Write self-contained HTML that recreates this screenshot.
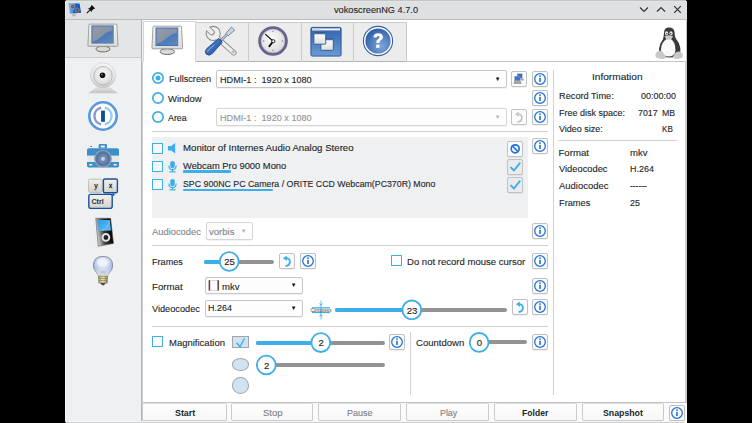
<!DOCTYPE html><html><head><meta charset="utf-8"><style>html,body{margin:0;padding:0;}body{width:752px;height:423px;background:#000;position:relative;overflow:hidden;font-family:"Liberation Sans",sans-serif;}.t{position:absolute;white-space:pre;line-height:1;-webkit-text-stroke:0.12px currentColor;}.b{-webkit-text-stroke:0;}</style></head><body>
<div style="position:absolute;left:65px;top:0px;width:622px;height:423px;background:#eff0f1;border-radius:3px;"></div>
<div style="position:absolute;left:65px;top:0px;width:622px;height:19px;background:#dfe0e2;border-radius:3px 3px 0 0;"></div>
<div style="position:absolute;left:65px;top:19px;width:622px;height:1px;background:#b9bbbd;"></div>
<div style="position:absolute;left:67px;top:0px;width:618px;height:1px;background:#c1c3c5;"></div>
<div style="position:absolute;left:66px;top:1px;width:620px;height:1px;background:#e4e6e6;"></div>
<div style="position:absolute;left:65px;top:2px;width:1px;height:17px;background:#e9eaeb;"></div>
<div class="t" style="left:333.60px;top:5.07px;font-size:9.6px;color:#232627;transform:scale(0.9611,1.0000);transform-origin:0 8.13px;">vokoscreenNG 4.7.0</div>
<div style="position:absolute;left:65px;top:20px;width:76px;height:403px;background:#eff0f1;border-radius:0 0 0 3px;"></div>
<div style="position:absolute;left:65px;top:20px;width:1px;height:400px;background:#f8f8f9;"></div>
<div style="position:absolute;left:141px;top:20px;width:1px;height:403px;background:#b3b5b7;"></div>
<div style="position:absolute;left:142px;top:20px;width:1px;height:42px;background:#eeeff0;"></div>
<div style="position:absolute;left:142px;top:62px;width:1px;height:361px;background:#cbcdce;"></div>
<div style="position:absolute;left:65px;top:20px;width:76px;height:37px;background:#e4e5e7;"></div>
<div style="position:absolute;left:65px;top:57px;width:76px;height:1px;background:#c9cbcd;"></div>
<div style="position:absolute;left:143px;top:20px;width:544px;height:403px;background:#ffffff;"></div>
<div style="position:absolute;left:143px;top:21px;width:53px;height:41px;box-sizing:border-box;border:1px solid #d3d5d6;border-bottom:none;background:#fff;"></div>
<div style="position:absolute;left:196px;top:22px;width:53px;height:40px;box-sizing:border-box;border:1px solid #c9cbcc;border-bottom:1px solid #b2b4b5;border-left:none;background:#ececed;border-radius:0 0 0 1px;"></div>
<div style="position:absolute;left:249px;top:22px;width:53px;height:40px;box-sizing:border-box;border:1px solid #c9cbcc;border-bottom:1px solid #b2b4b5;border-left:none;background:#ececed;border-radius:0 0 0 1px;"></div>
<div style="position:absolute;left:302px;top:22px;width:52px;height:40px;box-sizing:border-box;border:1px solid #c9cbcc;border-bottom:1px solid #b2b4b5;border-left:none;background:#ececed;border-radius:0 0 0 1px;"></div>
<div style="position:absolute;left:354px;top:22px;width:53px;height:40px;box-sizing:border-box;border:1px solid #c9cbcc;border-bottom:1px solid #b2b4b5;border-left:none;background:#ececed;border-radius:0 0 0 1px;"></div>
<div style="position:absolute;left:406px;top:61px;width:281px;height:1px;background:#c2c4c5;"></div>
<div style="position:absolute;left:685px;top:61px;width:1px;height:342px;background:#cfd1d2;"></div>
<div style="position:absolute;left:686px;top:20px;width:1px;height:403px;background:#c3c5c6;"></div>
<div style="position:absolute;left:143px;top:402px;width:543px;height:1px;background:#c2c4c5;"></div>
<svg style="position:absolute;left:150px;top:70.2px;" width="16" height="16" viewBox="0 0 16 16"><circle cx="8" cy="8" r="5.2" fill="#fdfdfd" stroke="#3daee9" stroke-width="1.7"/><circle cx="8" cy="8" r="2.5" fill="#3daee9"/></svg>
<svg style="position:absolute;left:150px;top:90px;" width="16" height="16" viewBox="0 0 16 16"><circle cx="8" cy="8" r="5.2" fill="#fdfdfd" stroke="#3daee9" stroke-width="1.7"/></svg>
<svg style="position:absolute;left:150px;top:108.8px;" width="16" height="16" viewBox="0 0 16 16"><circle cx="8" cy="8" r="5.2" fill="#fdfdfd" stroke="#3daee9" stroke-width="1.7"/></svg>
<div class="t" style="left:168.70px;top:74.47px;font-size:9.6px;color:#232627;transform:scale(0.9530,1.0000);transform-origin:0 8.13px;">Fullscreen</div>
<div class="t" style="left:168.40px;top:94.27px;font-size:9.6px;color:#232627;transform:scale(0.9870,1.0000);transform-origin:0 8.13px;">Window</div>
<div class="t" style="left:168.40px;top:112.67px;font-size:9.6px;color:#232627;transform:scale(0.9222,1.0000);transform-origin:0 8.13px;">Area</div>
<div style="position:absolute;left:216px;top:70px;width:291px;height:18px;box-sizing:border-box;border:1px solid #c4c6c8;border-radius:2px;background:#fdfdfd;box-shadow:0 1px 1px rgba(0,0,0,0.06);"></div>
<svg style="position:absolute;left:495px;top:76px;" width="6" height="6" viewBox="0 0 6 6"><path d="M1.3 1.8 L4.1 1.8 L2.7 4.6 Z" fill="#111" stroke="#111" stroke-width="0.5" stroke-linejoin="round"/></svg>
<div class="t" style="left:219.90px;top:74.97px;font-size:9.6px;color:#232627;transform:scale(0.9495,1.0000);transform-origin:0 8.13px;">HDMI-1 :  1920 x 1080</div>
<div style="position:absolute;left:216px;top:108px;width:291px;height:18px;box-sizing:border-box;border:1px solid #d3d5d6;border-radius:2px;background:#fdfdfd;box-shadow:0 1px 1px rgba(0,0,0,0.06);"></div>
<svg style="position:absolute;left:495px;top:114px;" width="6" height="6" viewBox="0 0 6 6"><path d="M1.3 1.8 L4.1 1.8 L2.7 4.6 Z" fill="#b0b2b4" stroke="#b0b2b4" stroke-width="0.5" stroke-linejoin="round"/></svg>
<div class="t" style="left:219.90px;top:112.87px;font-size:9.6px;color:#939597;transform:scale(0.9495,1.0000);transform-origin:0 8.13px;">HDMI-1 :  1920 x 1080</div>
<div style="position:absolute;left:511px;top:70.5px;width:16px;height:16px;box-sizing:border-box;border:1px solid #bfc1c3;border-radius:2px;background:#fcfcfc;box-shadow:0 0.5px 0.5px rgba(0,0,0,0.12);"></div>
<div style="position:absolute;left:511px;top:108.5px;width:16px;height:16px;box-sizing:border-box;border:1px solid #bfc1c3;border-radius:2px;background:#fcfcfc;box-shadow:0 0.5px 0.5px rgba(0,0,0,0.12);"></div>
<svg style="position:absolute;left:511px;top:108.5px;" width="16" height="16" viewBox="0 0 16 16"><path d="M5.5 5.2 C9.5 4.6 11.5 7 10.8 9.8 C10.3 11.8 8.6 12.8 7.2 12.9" fill="none" stroke="#c4c6c8" stroke-width="1.8" stroke-linecap="round"/><path d="M4.2 5.3 L7.8 2.6 L7.8 8 Z" fill="#c4c6c8"/></svg>
<div style="position:absolute;left:532px;top:70.5px;width:16px;height:16px;box-sizing:border-box;border:1px solid #bfc1c3;border-radius:2px;background:#fcfcfc;box-shadow:0 0.5px 0.5px rgba(0,0,0,0.12);"></div>
<svg style="position:absolute;left:532px;top:70.5px;" width="16" height="16" viewBox="0 0 16 16"><circle cx="8" cy="8" r="5.3" fill="#fffdf5" stroke="#1f73d9" stroke-width="1.3"/><rect x="7.2" y="6.8" width="1.6" height="4.2" fill="#1f73d9"/><circle cx="8" cy="5.1" r="0.95" fill="#1f73d9"/></svg>
<div style="position:absolute;left:532px;top:90px;width:16px;height:16px;box-sizing:border-box;border:1px solid #bfc1c3;border-radius:2px;background:#fcfcfc;box-shadow:0 0.5px 0.5px rgba(0,0,0,0.12);"></div>
<svg style="position:absolute;left:532px;top:90px;" width="16" height="16" viewBox="0 0 16 16"><circle cx="8" cy="8" r="5.3" fill="#fffdf5" stroke="#1f73d9" stroke-width="1.3"/><rect x="7.2" y="6.8" width="1.6" height="4.2" fill="#1f73d9"/><circle cx="8" cy="5.1" r="0.95" fill="#1f73d9"/></svg>
<div style="position:absolute;left:532px;top:109px;width:16px;height:16px;box-sizing:border-box;border:1px solid #bfc1c3;border-radius:2px;background:#fcfcfc;box-shadow:0 0.5px 0.5px rgba(0,0,0,0.12);"></div>
<svg style="position:absolute;left:532px;top:109px;" width="16" height="16" viewBox="0 0 16 16"><circle cx="8" cy="8" r="5.3" fill="#fffdf5" stroke="#1f73d9" stroke-width="1.3"/><rect x="7.2" y="6.8" width="1.6" height="4.2" fill="#1f73d9"/><circle cx="8" cy="5.1" r="0.95" fill="#1f73d9"/></svg>
<div style="position:absolute;left:152px;top:131px;width:396px;height:1px;background:#cfd1d2;"></div>
<div style="position:absolute;left:152px;top:137px;width:376px;height:81px;background:#eff0f1;"></div>
<div style="position:absolute;left:152.3px;top:143.1px;width:11px;height:11px;box-sizing:border-box;border:1.6px solid #3daee9;border-radius:0.5px;background:#f6f7f8;"></div>
<div style="position:absolute;left:152.3px;top:161.0px;width:11px;height:11px;box-sizing:border-box;border:1.6px solid #3daee9;border-radius:0.5px;background:#f6f7f8;"></div>
<div style="position:absolute;left:152.3px;top:179.1px;width:11px;height:11px;box-sizing:border-box;border:1.6px solid #3daee9;border-radius:0.5px;background:#f6f7f8;"></div>
<div class="t" style="left:183.20px;top:143.27px;font-size:9.6px;color:#232627;transform:scale(1.0059,1.0000);transform-origin:0 8.13px;">Monitor of Internes Audio Analog Stereo</div>
<div class="t" style="left:183.20px;top:161.17px;font-size:9.6px;color:#232627;transform:scale(0.9745,1.0000);transform-origin:0 8.13px;">Webcam Pro 9000 Mono</div>
<div class="t" style="left:183.20px;top:179.27px;font-size:9.6px;color:#232627;transform:scale(0.9161,1.0000);transform-origin:0 8.13px;">SPC 900NC PC Camera / ORITE CCD Webcam(PC370R) Mono</div>
<div style="position:absolute;left:183px;top:170.4px;width:48px;height:2.2px;background:#3daee9;border-radius:1px;"></div>
<div style="position:absolute;left:183px;top:188.5px;width:90px;height:2.2px;background:#3daee9;border-radius:1px;"></div>
<div style="position:absolute;left:507px;top:141px;width:16px;height:16px;box-sizing:border-box;border:1px solid #bfc1c3;border-radius:2px;background:#fcfcfc;box-shadow:0 0.5px 0.5px rgba(0,0,0,0.12);"></div>
<svg style="position:absolute;left:507px;top:141px;" width="16" height="16" viewBox="0 0 16 16"><circle cx="8.2" cy="7.8" r="4" fill="none" stroke="#1f73d9" stroke-width="1.7"/><path d="M5.4 5 L11 10.6" stroke="#1f73d9" stroke-width="1.7"/></svg>
<div style="position:absolute;left:507px;top:159px;width:16px;height:16px;box-sizing:border-box;border:1px solid #bfc1c3;border-radius:2px;background:#ebebec;box-shadow:0 0.5px 0.5px rgba(0,0,0,0.12);"></div>
<div style="position:absolute;left:507px;top:177px;width:16px;height:16px;box-sizing:border-box;border:1px solid #bfc1c3;border-radius:2px;background:#ebebec;box-shadow:0 0.5px 0.5px rgba(0,0,0,0.12);"></div>
<svg style="position:absolute;left:507px;top:159px;" width="16" height="16" viewBox="0 0 16 16"><path d="M4 8.6 L7 11.5 L12.8 4.2" fill="none" stroke="#3daee9" stroke-width="1.9" stroke-linecap="round" stroke-linejoin="round"/></svg>
<svg style="position:absolute;left:507px;top:177px;" width="16" height="16" viewBox="0 0 16 16"><path d="M4 8.6 L7 11.5 L12.8 4.2" fill="none" stroke="#3daee9" stroke-width="1.9" stroke-linecap="round" stroke-linejoin="round"/></svg>
<div style="position:absolute;left:532px;top:138px;width:16px;height:16px;box-sizing:border-box;border:1px solid #bfc1c3;border-radius:2px;background:#fcfcfc;box-shadow:0 0.5px 0.5px rgba(0,0,0,0.12);"></div>
<svg style="position:absolute;left:532px;top:138px;" width="16" height="16" viewBox="0 0 16 16"><circle cx="8" cy="8" r="5.3" fill="#fffdf5" stroke="#1f73d9" stroke-width="1.3"/><rect x="7.2" y="6.8" width="1.6" height="4.2" fill="#1f73d9"/><circle cx="8" cy="5.1" r="0.95" fill="#1f73d9"/></svg>
<div class="t" style="left:151.70px;top:226.77px;font-size:9.6px;color:#838587;transform:scale(0.9747,1.0000);transform-origin:0 8.13px;">Audiocodec</div>
<div style="position:absolute;left:206px;top:222px;width:47px;height:18px;box-sizing:border-box;border:1px solid #d3d5d6;border-radius:2px;background:#fdfdfd;box-shadow:0 1px 1px rgba(0,0,0,0.06);"></div>
<svg style="position:absolute;left:241px;top:228px;" width="6" height="6" viewBox="0 0 6 6"><path d="M1.3 1.8 L4.1 1.8 L2.7 4.6 Z" fill="#b0b2b4" stroke="#b0b2b4" stroke-width="0.5" stroke-linejoin="round"/></svg>
<div class="t" style="left:209.20px;top:226.67px;font-size:9.6px;color:#838587;transform:scale(0.9958,1.0000);transform-origin:0 8.13px;">vorbis</div>
<div style="position:absolute;left:532px;top:223px;width:16px;height:16px;box-sizing:border-box;border:1px solid #bfc1c3;border-radius:2px;background:#fcfcfc;box-shadow:0 0.5px 0.5px rgba(0,0,0,0.12);"></div>
<svg style="position:absolute;left:532px;top:223px;" width="16" height="16" viewBox="0 0 16 16"><circle cx="8" cy="8" r="5.3" fill="#fffdf5" stroke="#1f73d9" stroke-width="1.3"/><rect x="7.2" y="6.8" width="1.6" height="4.2" fill="#1f73d9"/><circle cx="8" cy="5.1" r="0.95" fill="#1f73d9"/></svg>
<div style="position:absolute;left:152px;top:245px;width:396px;height:1px;background:#cfd1d2;"></div>
<div class="t" style="left:151.70px;top:257.27px;font-size:9.6px;color:#232627;transform:scale(0.9498,1.0000);transform-origin:0 8.13px;">Frames</div>
<div style="position:absolute;left:204px;top:259.5px;width:70px;height:4px;background:#919394;border-radius:2px;"></div>
<div style="position:absolute;left:204px;top:259.5px;width:25.19999999999999px;height:4px;background:#3daee9;border-radius:2px;"></div>
<svg style="position:absolute;left:218px;top:250px;" width="22" height="22" viewBox="0 0 22 22"><circle cx="11.199999999999989" cy="11.5" r="9.4" fill="#fff" stroke="#3daee9" stroke-width="1.8"/></svg>
<div class="t" style="left:224.16px;top:257.37px;font-size:9.6px;color:#1e2021;-webkit-text-stroke:0.12px #1e2021;">25</div>
<div style="position:absolute;left:279px;top:253px;width:16px;height:16px;box-sizing:border-box;border:1px solid #bfc1c3;border-radius:2px;background:#fcfcfc;box-shadow:0 0.5px 0.5px rgba(0,0,0,0.12);"></div>
<svg style="position:absolute;left:279px;top:253px;" width="16" height="16" viewBox="0 0 16 16"><path d="M5.5 5.2 C9.5 4.6 11.5 7 10.8 9.8 C10.3 11.8 8.6 12.8 7.2 12.9" fill="none" stroke="#3daee9" stroke-width="1.8" stroke-linecap="round"/><path d="M4.2 5.3 L7.8 2.6 L7.8 8 Z" fill="#3daee9"/></svg>
<div style="position:absolute;left:299.5px;top:253px;width:16px;height:16px;box-sizing:border-box;border:1px solid #bfc1c3;border-radius:2px;background:#fcfcfc;box-shadow:0 0.5px 0.5px rgba(0,0,0,0.12);"></div>
<svg style="position:absolute;left:299.5px;top:253px;" width="16" height="16" viewBox="0 0 16 16"><circle cx="8" cy="8" r="5.3" fill="#fffdf5" stroke="#1f73d9" stroke-width="1.3"/><rect x="7.2" y="6.8" width="1.6" height="4.2" fill="#1f73d9"/><circle cx="8" cy="5.1" r="0.95" fill="#1f73d9"/></svg>
<div style="position:absolute;left:391px;top:255px;width:11px;height:11px;box-sizing:border-box;border:1.6px solid #3daee9;border-radius:0.5px;background:#fdfdfd;"></div>
<div class="t" style="left:407.30px;top:257.47px;font-size:9.6px;color:#232627;transform:scale(0.9943,1.0000);transform-origin:0 8.13px;">Do not record mouse cursor</div>
<div style="position:absolute;left:532px;top:253px;width:16px;height:16px;box-sizing:border-box;border:1px solid #bfc1c3;border-radius:2px;background:#fcfcfc;box-shadow:0 0.5px 0.5px rgba(0,0,0,0.12);"></div>
<svg style="position:absolute;left:532px;top:253px;" width="16" height="16" viewBox="0 0 16 16"><circle cx="8" cy="8" r="5.3" fill="#fffdf5" stroke="#1f73d9" stroke-width="1.3"/><rect x="7.2" y="6.8" width="1.6" height="4.2" fill="#1f73d9"/><circle cx="8" cy="5.1" r="0.95" fill="#1f73d9"/></svg>
<div class="t" style="left:152.30px;top:281.57px;font-size:9.6px;color:#232627;transform:scale(1.0066,1.0000);transform-origin:0 8.13px;">Format</div>
<div style="position:absolute;left:204.5px;top:277px;width:98px;height:17px;box-sizing:border-box;border:1px solid #c4c6c8;border-radius:2px;background:#fdfdfd;box-shadow:0 1px 1px rgba(0,0,0,0.06);"></div>
<svg style="position:absolute;left:291px;top:282px;" width="6" height="6" viewBox="0 0 6 6"><path d="M1.3 1.8 L4.1 1.8 L2.7 4.6 Z" fill="#111" stroke="#111" stroke-width="0.5" stroke-linejoin="round"/></svg>
<svg style="position:absolute;left:208px;top:279px;" width="12" height="13" viewBox="0 0 12 13"><rect x="1.3" y="1.4" width="9" height="10" fill="#fbfbfb" stroke="#d9cccc" stroke-width="0.8"/><path d="M1.4 1.2 V11.6 M10.2 1.2 V11.6" stroke="#6e3b3b" stroke-width="1.5"/></svg>
<div class="t" style="left:221.90px;top:281.57px;font-size:9.6px;color:#232627;transform:scale(0.9945,1.0000);transform-origin:0 8.13px;">mkv</div>
<div style="position:absolute;left:532px;top:278px;width:16px;height:16px;box-sizing:border-box;border:1px solid #bfc1c3;border-radius:2px;background:#fcfcfc;box-shadow:0 0.5px 0.5px rgba(0,0,0,0.12);"></div>
<svg style="position:absolute;left:532px;top:278px;" width="16" height="16" viewBox="0 0 16 16"><circle cx="8" cy="8" r="5.3" fill="#fffdf5" stroke="#1f73d9" stroke-width="1.3"/><rect x="7.2" y="6.8" width="1.6" height="4.2" fill="#1f73d9"/><circle cx="8" cy="5.1" r="0.95" fill="#1f73d9"/></svg>
<div class="t" style="left:151.90px;top:304.17px;font-size:9.6px;color:#232627;transform:scale(0.9581,1.0000);transform-origin:0 8.13px;">Videocodec</div>
<div style="position:absolute;left:204.5px;top:299.5px;width:98px;height:17px;box-sizing:border-box;border:1px solid #c4c6c8;border-radius:2px;background:#fdfdfd;box-shadow:0 1px 1px rgba(0,0,0,0.06);"></div>
<svg style="position:absolute;left:291px;top:305px;" width="6" height="6" viewBox="0 0 6 6"><path d="M1.3 1.8 L4.1 1.8 L2.7 4.6 Z" fill="#111" stroke="#111" stroke-width="0.5" stroke-linejoin="round"/></svg>
<div class="t" style="left:208.20px;top:303.47px;font-size:9.6px;color:#232627;transform:scale(0.9330,1.0000);transform-origin:0 8.13px;">H.264</div>
<svg style="position:absolute;left:310px;top:300px;" width="22" height="20" viewBox="0 0 22 20"><path d="M11 0.5 V19.5" stroke="#3daee9" stroke-width="1" opacity="0.75"/><path d="M9.6 3.4 L11 5.4 L12.4 3.4 M9.6 16.6 L11 14.6 L12.4 16.6" stroke="#3daee9" stroke-width="0.8" fill="none"/><rect x="2" y="7.2" width="18" height="1.3" fill="#3daee9"/><rect x="2" y="11.8" width="18" height="1.3" fill="#3daee9"/><text x="11" y="11.7" font-size="4.6" text-anchor="middle" fill="#5a4a44" font-family="Liberation Sans">Compress</text></svg>
<div style="position:absolute;left:335px;top:307.9px;width:172px;height:4px;background:#919394;border-radius:2px;"></div>
<div style="position:absolute;left:335px;top:307.9px;width:76.80000000000001px;height:4px;background:#3daee9;border-radius:2px;"></div>
<svg style="position:absolute;left:400px;top:298px;" width="22" height="22" viewBox="0 0 22 22"><circle cx="11.800000000000011" cy="11.899999999999977" r="9.4" fill="#fff" stroke="#3daee9" stroke-width="1.8"/></svg>
<div class="t" style="left:406.76px;top:305.77px;font-size:9.6px;color:#1e2021;-webkit-text-stroke:0.12px #1e2021;">23</div>
<div style="position:absolute;left:512px;top:299px;width:16px;height:16px;box-sizing:border-box;border:1px solid #bfc1c3;border-radius:2px;background:#fcfcfc;box-shadow:0 0.5px 0.5px rgba(0,0,0,0.12);"></div>
<svg style="position:absolute;left:512px;top:299px;" width="16" height="16" viewBox="0 0 16 16"><path d="M5.5 5.2 C9.5 4.6 11.5 7 10.8 9.8 C10.3 11.8 8.6 12.8 7.2 12.9" fill="none" stroke="#3daee9" stroke-width="1.8" stroke-linecap="round"/><path d="M4.2 5.3 L7.8 2.6 L7.8 8 Z" fill="#3daee9"/></svg>
<div style="position:absolute;left:532px;top:299px;width:16px;height:16px;box-sizing:border-box;border:1px solid #bfc1c3;border-radius:2px;background:#fcfcfc;box-shadow:0 0.5px 0.5px rgba(0,0,0,0.12);"></div>
<svg style="position:absolute;left:532px;top:299px;" width="16" height="16" viewBox="0 0 16 16"><circle cx="8" cy="8" r="5.3" fill="#fffdf5" stroke="#1f73d9" stroke-width="1.3"/><rect x="7.2" y="6.8" width="1.6" height="4.2" fill="#1f73d9"/><circle cx="8" cy="5.1" r="0.95" fill="#1f73d9"/></svg>
<div style="position:absolute;left:152px;top:326px;width:396px;height:1px;background:#cfd1d2;"></div>
<div style="position:absolute;left:152px;top:336px;width:11px;height:11px;box-sizing:border-box;border:1.6px solid #3daee9;border-radius:0.5px;background:#fdfdfd;"></div>
<div class="t" style="left:168.50px;top:337.87px;font-size:9.6px;color:#232627;transform:scale(0.9901,1.0000);transform-origin:0 8.13px;">Magnification</div>
<div style="position:absolute;left:232px;top:336px;width:17px;height:12px;box-sizing:border-box;border:1.2px solid #a3a5a7;background:#cfe3f3;"></div>
<svg style="position:absolute;left:232px;top:335.5px;" width="17" height="13" viewBox="0 0 17 13"><path d="M4.5 6.8 L8 10.8 L12.5 2.5" fill="none" stroke="#3daee9" stroke-width="1.4"/></svg>
<div style="position:absolute;left:232px;top:358px;width:17px;height:12.5px;box-sizing:border-box;border:1.5px solid #a3a5a7;border-radius:50%;background:#cfe3f3;"></div>
<div style="position:absolute;left:232px;top:377px;width:17px;height:16.5px;box-sizing:border-box;border:1.6px solid #a3a5a7;border-radius:50%;background:#cfe3f3;"></div>
<div style="position:absolute;left:256px;top:340.6px;width:129px;height:4px;background:#919394;border-radius:2px;"></div>
<div style="position:absolute;left:256px;top:340.6px;width:64.80000000000001px;height:4px;background:#3daee9;border-radius:2px;"></div>
<svg style="position:absolute;left:309px;top:331px;" width="22" height="22" viewBox="0 0 22 22"><circle cx="11.800000000000011" cy="11.600000000000023" r="9.4" fill="#fff" stroke="#3daee9" stroke-width="1.8"/></svg>
<div class="t" style="left:318.43px;top:338.47px;font-size:9.6px;color:#1e2021;-webkit-text-stroke:0.12px #1e2021;">2</div>
<div style="position:absolute;left:256px;top:363px;width:129px;height:4px;background:#919394;border-radius:2px;"></div>
<svg style="position:absolute;left:255px;top:354px;" width="22" height="22" viewBox="0 0 22 22"><circle cx="11.300000000000011" cy="11" r="9.4" fill="#fff" stroke="#3daee9" stroke-width="1.8"/></svg>
<div class="t" style="left:263.93px;top:360.87px;font-size:9.6px;color:#1e2021;-webkit-text-stroke:0.12px #1e2021;">2</div>
<div style="position:absolute;left:389px;top:334px;width:16px;height:16px;box-sizing:border-box;border:1px solid #bfc1c3;border-radius:2px;background:#fcfcfc;box-shadow:0 0.5px 0.5px rgba(0,0,0,0.12);"></div>
<svg style="position:absolute;left:389px;top:334px;" width="16" height="16" viewBox="0 0 16 16"><circle cx="8" cy="8" r="5.3" fill="#fffdf5" stroke="#1f73d9" stroke-width="1.3"/><rect x="7.2" y="6.8" width="1.6" height="4.2" fill="#1f73d9"/><circle cx="8" cy="5.1" r="0.95" fill="#1f73d9"/></svg>
<div style="position:absolute;left:410px;top:332px;width:1px;height:63px;background:#cfd1d2;"></div>
<div class="t" style="left:416.00px;top:338.07px;font-size:9.6px;color:#232627;transform:scale(0.9946,1.0000);transform-origin:0 8.13px;">Countdown</div>
<div style="position:absolute;left:479px;top:340.4px;width:48px;height:4px;background:#919394;border-radius:2px;"></div>
<svg style="position:absolute;left:468px;top:331px;" width="22" height="22" viewBox="0 0 22 22"><circle cx="11.100000000000023" cy="11.399999999999977" r="9.4" fill="#fff" stroke="#3daee9" stroke-width="1.8"/></svg>
<div class="t" style="left:476.73px;top:338.27px;font-size:9.6px;color:#1e2021;-webkit-text-stroke:0.12px #1e2021;">0</div>
<div style="position:absolute;left:532px;top:334px;width:16px;height:16px;box-sizing:border-box;border:1px solid #bfc1c3;border-radius:2px;background:#fcfcfc;box-shadow:0 0.5px 0.5px rgba(0,0,0,0.12);"></div>
<svg style="position:absolute;left:532px;top:334px;" width="16" height="16" viewBox="0 0 16 16"><circle cx="8" cy="8" r="5.3" fill="#fffdf5" stroke="#1f73d9" stroke-width="1.3"/><rect x="7.2" y="6.8" width="1.6" height="4.2" fill="#1f73d9"/><circle cx="8" cy="5.1" r="0.95" fill="#1f73d9"/></svg>
<div style="position:absolute;left:553px;top:70px;width:1px;height:325px;background:#cfd1d2;"></div>
<div class="t" style="left:592.00px;top:72.27px;font-size:9.6px;color:#232627;transform:scale(1.0537,1.0000);transform-origin:0 8.13px;">Information</div>
<div class="t" style="left:559.10px;top:91.37px;font-size:9.6px;color:#232627;transform:scale(0.9600,1.0000);transform-origin:0 8.13px;">Record Time:</div>
<div class="t" style="left:640.90px;top:91.37px;font-size:9.6px;color:#232627;transform:scale(0.9394,1.0000);transform-origin:0 8.13px;">00:00:00</div>
<div class="t" style="left:559.10px;top:107.97px;font-size:9.6px;color:#232627;transform:scale(0.9386,1.0000);transform-origin:0 8.13px;">Free disk space:</div>
<div class="t" style="left:637.50px;top:107.87px;font-size:9.6px;color:#232627;transform:scale(0.9179,1.0000);transform-origin:0 8.13px;">7017</div>
<div class="t" style="left:662.40px;top:107.87px;font-size:9.6px;color:#232627;transform:scale(0.9097,1.0000);transform-origin:0 8.13px;">MB</div>
<div class="t" style="left:559.10px;top:124.47px;font-size:9.6px;color:#232627;transform:scale(0.9362,1.0000);transform-origin:0 8.13px;">Video size:</div>
<div class="t" style="left:662.40px;top:124.17px;font-size:9.6px;color:#232627;transform:scale(0.8433,1.0000);transform-origin:0 8.13px;">KB</div>
<div style="position:absolute;left:558px;top:140px;width:119px;height:1px;background:#cfd1d2;"></div>
<div class="t" style="left:558.50px;top:147.77px;font-size:9.6px;color:#232627;">Format</div>
<div class="t" style="left:630.40px;top:147.77px;font-size:9.6px;color:#232627;transform:scale(0.9945,1.0000);transform-origin:0 8.13px;">mkv</div>
<div class="t" style="left:558.50px;top:164.44px;font-size:9.6px;color:#232627;transform:scale(0.9701,1.0000);transform-origin:0 8.13px;">Videocodec</div>
<div class="t" style="left:630.40px;top:164.44px;font-size:9.6px;color:#232627;transform:scale(0.9330,1.0000);transform-origin:0 8.13px;">H.264</div>
<div class="t" style="left:558.50px;top:181.11px;font-size:9.6px;color:#232627;transform:scale(0.9847,1.0000);transform-origin:0 8.13px;">Audiocodec</div>
<div class="t" style="left:630.40px;top:181.11px;font-size:9.6px;color:#232627;transform:scale(0.8760,1.0000);transform-origin:0 8.13px;">------</div>
<div class="t" style="left:558.50px;top:197.78px;font-size:9.6px;color:#232627;transform:scale(0.9621,1.0000);transform-origin:0 8.13px;">Frames</div>
<div class="t" style="left:630.40px;top:197.78px;font-size:9.6px;color:#232627;transform:scale(0.9366,1.0000);transform-origin:0 8.13px;">25</div>
<div style="position:absolute;left:143px;top:403px;width:544px;height:20px;background:#fbfbfb;"></div>
<div style="position:absolute;left:142px;top:403px;width:85px;height:18px;box-sizing:border-box;border:1px solid #c8cacc;border-top-color:#dadcdd;border-radius:2px;background:linear-gradient(#fefefe,#f7f7f7);"></div>
<div class="t" style="left:174.70px;top:408.07px;font-size:9.6px;color:#232627;font-weight:bold;-webkit-text-stroke:0;transform:scale(0.9236,1.0000);transform-origin:0 8.13px;">Start</div>
<div style="position:absolute;left:231px;top:403px;width:82px;height:18px;box-sizing:border-box;border:1px solid #c8cacc;border-top-color:#dadcdd;border-radius:2px;background:linear-gradient(#fefefe,#f7f7f7);"></div>
<div class="t" style="left:262.60px;top:408.07px;font-size:9.6px;color:#7e8082;transform:scale(0.9925,1.0000);transform-origin:0 8.13px;">Stop</div>
<div style="position:absolute;left:318px;top:403px;width:83px;height:18px;box-sizing:border-box;border:1px solid #c8cacc;border-top-color:#dadcdd;border-radius:2px;background:linear-gradient(#fefefe,#f7f7f7);"></div>
<div class="t" style="left:347.40px;top:408.07px;font-size:9.6px;color:#7e8082;transform:scale(0.9368,1.0000);transform-origin:0 8.13px;">Pause</div>
<div style="position:absolute;left:406px;top:403px;width:83px;height:18px;box-sizing:border-box;border:1px solid #c8cacc;border-top-color:#dadcdd;border-radius:2px;background:linear-gradient(#fefefe,#f7f7f7);"></div>
<div class="t" style="left:439.60px;top:408.07px;font-size:9.6px;color:#7e8082;transform:scale(0.9210,1.0000);transform-origin:0 8.13px;">Play</div>
<div style="position:absolute;left:494px;top:403px;width:83px;height:18px;box-sizing:border-box;border:1px solid #c8cacc;border-top-color:#dadcdd;border-radius:2px;background:linear-gradient(#fefefe,#f7f7f7);"></div>
<div class="t" style="left:522.30px;top:408.07px;font-size:9.6px;color:#232627;font-weight:bold;-webkit-text-stroke:0;transform:scale(0.8966,1.0000);transform-origin:0 8.13px;">Folder</div>
<div style="position:absolute;left:582px;top:403px;width:82px;height:18px;box-sizing:border-box;border:1px solid #c8cacc;border-top-color:#dadcdd;border-radius:2px;background:linear-gradient(#fefefe,#f7f7f7);"></div>
<div class="t" style="left:603.20px;top:408.07px;font-size:9.6px;color:#232627;font-weight:bold;-webkit-text-stroke:0;transform:scale(0.9124,1.0000);transform-origin:0 8.13px;">Snapshot</div>
<div style="position:absolute;left:669px;top:404.5px;width:16px;height:16px;box-sizing:border-box;border:1px solid #bfc1c3;border-radius:2px;background:#fcfcfc;box-shadow:0 0.5px 0.5px rgba(0,0,0,0.12);"></div>
<svg style="position:absolute;left:669px;top:404.5px;" width="16" height="16" viewBox="0 0 16 16"><circle cx="8" cy="8" r="5.3" fill="#fffdf5" stroke="#1f73d9" stroke-width="1.3"/><rect x="7.2" y="6.8" width="1.6" height="4.2" fill="#1f73d9"/><circle cx="8" cy="5.1" r="0.95" fill="#1f73d9"/></svg>
<div style="position:absolute;left:68px;top:421px;width:616px;height:1px;background:#f6f6f7;"></div>
<div style="position:absolute;left:66px;top:422px;width:619px;height:1px;background:#cdcfd0;border-radius:0 0 2px 2px;"></div>
<svg style="position:absolute;left:151px;top:24px" width="32.0" height="32.0" viewBox="0 0 32 32">
<defs><linearGradient id="mtg" x1="0" y1="0" x2="1" y2="1"><stop offset="0" stop-color="#959ca6"/><stop offset="1" stop-color="#7d8b9e"/></linearGradient>
<linearGradient id="mtb" x1="0" y1="0" x2="1" y2="1"><stop offset="0" stop-color="#3b69a8"/><stop offset="1" stop-color="#6089c0"/></linearGradient>
<linearGradient id="mtf" x1="0" y1="0" x2="0" y2="1"><stop offset="0" stop-color="#f6f5f1"/><stop offset="1" stop-color="#dddbd5"/></linearGradient></defs>
<path d="M12.6 24 L20 24 L20.6 26.5 L12 26.5 Z" fill="#d2d2ce" stroke="#9a9b97" stroke-width="0.5"/>
<ellipse cx="16.3" cy="27.6" rx="7.2" ry="2.9" fill="#d9d9d5" stroke="#6a6c68" stroke-width="1"/>
<path d="M2.8 2.2 L29.8 2.2 Q30.5 2.2 30.5 3 L31.6 23.8 Q31.6 24.8 30.6 24.8 L1.8 24.8 Q0.8 24.8 0.9 23.8 L2 3 Q2 2.2 2.8 2.2 Z" fill="url(#mtf)" stroke="#8d8e89" stroke-width="0.8"/>
<rect x="5" y="4" width="21.7" height="17.5" fill="url(#mtg)" stroke="#3a72c8" stroke-width="1"/>
<path d="M5.4 19.6 Q11 18.6 16 13.6 Q21 9 26.3 8.4 L26.3 21.1 L5.4 21.1 Z" fill="url(#mtb)"/>
<path d="M5.4 19.6 Q11 18.6 16 13.6 Q21 9 26.3 8.4" fill="none" stroke="#7ea2d6" stroke-width="0.5" opacity="0.7"/>
</svg>
<svg style="position:absolute;left:203px;top:24px" width="34" height="34" viewBox="0 0 34 34">
<defs><linearGradient id="tlh" x1="0" y1="0" x2="1" y2="1"><stop offset="0" stop-color="#5b8fd4"/><stop offset="0.6" stop-color="#3467b2"/><stop offset="1" stop-color="#234f94"/></linearGradient>
<clipPath id="wclip"><circle cx="10.2" cy="9.4" r="7.6"/></clipPath></defs>
<path d="M11 11 L30.8 28.8" stroke="#8a8c88" stroke-width="5.4" stroke-linecap="round"/>
<circle cx="10.2" cy="9.4" r="7.6" fill="#8a8c88"/>
<path d="M11 11 L30.8 28.8" stroke="#efeeeb" stroke-width="3.6" stroke-linecap="round"/>
<circle cx="10.2" cy="9.4" r="6.5" fill="#efeeeb"/>
<path d="M2 2.2 L8.8 8.4" stroke="#8a8c88" stroke-width="6" stroke-linecap="round" clip-path="url(#wclip)"/>
<path d="M1 1.2 L8.6 8.2" stroke="#ececed" stroke-width="4.2" stroke-linecap="round"/>
<circle cx="30" cy="28" r="1" fill="none" stroke="#9a9c98" stroke-width="0.7"/>
<path d="M28.4 3 L31.8 6.2 L25.2 11.8 L22.8 9.6 Z" fill="#c9d5e3" stroke="#6e7d8e" stroke-width="0.9" stroke-linejoin="round"/>
<path d="M23.8 10.6 L17.6 16.8" stroke="#6e7d8e" stroke-width="2.6"/>
<path d="M23.8 10.6 L17.6 16.8" stroke="#c0c8d2" stroke-width="1.3"/>
<path d="M15.4 14.6 Q18.6 15.4 19 18.6 L9.4 29.4 Q6.4 32.4 3.4 30.2 Q1 27.6 3.8 24.6 Z" fill="url(#tlh)" stroke="#1d4a8c" stroke-width="0.9" stroke-linejoin="round"/>
<path d="M4.4 27.4 L11 20.8" stroke="#b4cdef" stroke-width="1" stroke-linecap="round" opacity="0.75"/>
</svg>
<svg style="position:absolute;left:257.3px;top:25.4px" width="32" height="32" viewBox="0 0 32 32">
<defs><radialGradient id="clf" cx="0.45" cy="0.4" r="0.6"><stop offset="0" stop-color="#fbfbfb"/><stop offset="1" stop-color="#d9d9d9"/></radialGradient></defs>
<circle cx="16" cy="16" r="13.4" fill="url(#clf)" stroke="#67628b" stroke-width="2.8"/>
<circle cx="16" cy="16" r="11.9" fill="none" stroke="#9c97b8" stroke-width="0.6"/>
<circle cx="16" cy="6.3" r="0.9" fill="#a9a9a9"/><circle cx="16" cy="25.5" r="0.9" fill="#a9a9a9"/>
<circle cx="6.6" cy="16" r="0.9" fill="#a9a9a9"/><circle cx="25.4" cy="16" r="0.9" fill="#a9a9a9"/>
<path d="M16.2 16.3 L8.6 9.4" stroke="#111" stroke-width="1.2" stroke-linecap="round"/>
<path d="M16 16.4 L12.3 21.4" stroke="#111" stroke-width="1.8" stroke-linecap="round"/>
<circle cx="16.3" cy="16.2" r="1.6" fill="#fff" stroke="#111" stroke-width="0.9"/>
</svg>
<svg style="position:absolute;left:309.5px;top:25.6px" width="32" height="32" viewBox="0 0 32 32">
<defs><linearGradient id="wbg" x1="0" y1="0" x2="0" y2="1"><stop offset="0" stop-color="#2f64ad"/><stop offset="1" stop-color="#6a9ad4"/></linearGradient>
<linearGradient id="wwf" x1="0" y1="0" x2="0" y2="1"><stop offset="0" stop-color="#ffffff"/><stop offset="1" stop-color="#dcdcdc"/></linearGradient></defs>
<rect x="0.9" y="1.4" width="30.2" height="28.7" rx="1.4" fill="url(#wbg)" stroke="#244f8e" stroke-width="0.9"/>
<rect x="2" y="2.4" width="28" height="2" fill="#f7f7f7"/>
<rect x="2.3" y="2.6" width="9" height="1.6" fill="#d8d8d8"/>
<rect x="10.9" y="12.9" width="12.4" height="11.4" rx="0.6" fill="url(#wwf)" stroke="#1f4a87" stroke-width="0.8"/>
<rect x="11.3" y="13.3" width="11.6" height="0.9" fill="#1f4a87"/>
<rect x="3.9" y="6.9" width="11.8" height="11.3" rx="0.6" fill="url(#wwf)" stroke="#1f4a87" stroke-width="0.8"/>
<rect x="4.3" y="7.3" width="11" height="0.9" fill="#1f4a87"/>
</svg>
<svg style="position:absolute;left:362.3px;top:25.4px" width="32" height="32" viewBox="0 0 32 32">
<defs><radialGradient id="hg" cx="0.62" cy="0.7" r="0.75"><stop offset="0" stop-color="#7ea8da"/><stop offset="1" stop-color="#2b5ba4"/></radialGradient></defs>
<circle cx="16" cy="16" r="14.6" fill="#fff" stroke="#3563a8" stroke-width="1.1"/>
<circle cx="16" cy="16" r="12.6" fill="url(#hg)"/>
<path d="M11.4 12.6 Q11.4 8.2 16.2 8.2 Q20.9 8.2 20.9 12.2 Q20.9 14.5 18.6 15.6 Q17.4 16.3 17.4 18.1 L14.2 18.1 Q14.1 15.2 16.3 14 Q17.5 13.3 17.5 12.3 Q17.5 11 16.1 11 Q14.7 11 14.6 12.6 Z" fill="#fff"/>
<rect x="14.2" y="19.6" width="3.3" height="3.2" fill="#fff"/>
</svg>
<svg style="position:absolute;left:87.2px;top:22.2px" width="31.36" height="31.36" viewBox="0 0 32 32">
<defs><linearGradient id="msg" x1="0" y1="0" x2="1" y2="1"><stop offset="0" stop-color="#959ca6"/><stop offset="1" stop-color="#7d8b9e"/></linearGradient>
<linearGradient id="msb" x1="0" y1="0" x2="1" y2="1"><stop offset="0" stop-color="#3b69a8"/><stop offset="1" stop-color="#6089c0"/></linearGradient>
<linearGradient id="msf" x1="0" y1="0" x2="0" y2="1"><stop offset="0" stop-color="#f6f5f1"/><stop offset="1" stop-color="#dddbd5"/></linearGradient></defs>
<path d="M12.6 24 L20 24 L20.6 26.5 L12 26.5 Z" fill="#d2d2ce" stroke="#9a9b97" stroke-width="0.5"/>
<ellipse cx="16.3" cy="27.6" rx="7.2" ry="2.9" fill="#d9d9d5" stroke="#6a6c68" stroke-width="1"/>
<path d="M2.8 2.2 L29.8 2.2 Q30.5 2.2 30.5 3 L31.6 23.8 Q31.6 24.8 30.6 24.8 L1.8 24.8 Q0.8 24.8 0.9 23.8 L2 3 Q2 2.2 2.8 2.2 Z" fill="url(#msf)" stroke="#8d8e89" stroke-width="0.8"/>
<rect x="5" y="4" width="21.7" height="17.5" fill="url(#msg)" stroke="#3a72c8" stroke-width="1"/>
<path d="M5.4 19.6 Q11 18.6 16 13.6 Q21 9 26.3 8.4 L26.3 21.1 L5.4 21.1 Z" fill="url(#msb)"/>
<path d="M5.4 19.6 Q11 18.6 16 13.6 Q21 9 26.3 8.4" fill="none" stroke="#7ea2d6" stroke-width="0.5" opacity="0.7"/>
</svg>
<svg style="position:absolute;left:86.9px;top:61.9px" width="32" height="34" viewBox="0 0 32 34">
<defs><radialGradient id="wcg" cx="0.5" cy="0.3" r="0.72"><stop offset="0" stop-color="#ffffff"/><stop offset="0.7" stop-color="#e4e4e4"/><stop offset="1" stop-color="#bdbdbd"/></radialGradient>
<radialGradient id="wci" cx="0.5" cy="0.4" r="0.6"><stop offset="0" stop-color="#fafafa"/><stop offset="1" stop-color="#dadada"/></radialGradient>
<linearGradient id="wcb" x1="0" y1="0" x2="0" y2="1"><stop offset="0" stop-color="#e6e6e6"/><stop offset="1" stop-color="#c4c4c4"/></linearGradient></defs>
<path d="M10 24.5 L22 24.5 L31 31.2 L1.4 31.2 Z" fill="url(#wcb)"/>
<circle cx="16" cy="13.3" r="12.6" fill="url(#wcg)" stroke="#d2d2d2" stroke-width="0.6"/>
<circle cx="16" cy="13.6" r="9.2" fill="url(#wci)" stroke="#b4b4b4" stroke-width="0.9"/>
<circle cx="15.5" cy="13.3" r="2.8" fill="#111"/>
<circle cx="14.8" cy="12.6" r="0.8" fill="#888"/>
</svg>
<svg style="position:absolute;left:87.1px;top:100.3px" width="32" height="32" viewBox="0 0 32 32">
<circle cx="16" cy="16" r="15.2" fill="#fff" opacity="0.6"/>
<circle cx="16" cy="16" r="13.7" fill="#fdfdfd" stroke="#5698db" stroke-width="2.6"/>
<path d="M14.2 7.6 A8.6 8.6 0 0 0 14.2 24.4" fill="none" stroke="#9590d2" stroke-width="2.4"/>
<path d="M17.8 7.6 A8.6 8.6 0 0 1 17.8 24.4" fill="none" stroke="#95cdf6" stroke-width="2.4"/>
<rect x="14.1" y="10.6" width="3.8" height="11.2" fill="#0e4f8c"/>
</svg>
<svg style="position:absolute;left:85.9px;top:143.1px" width="34" height="28" viewBox="0 0 34 28">
<path d="M12.6 5.2 L12.6 2.4 Q12.6 1 14 1 L19.6 1 Q21 1 21 2.4 L21 5.2" fill="#3d8fca"/>
<rect x="14.6" y="2.6" width="4.4" height="2" rx="1" fill="#eef3f8"/>
<rect x="1" y="5.2" width="32" height="19.4" rx="1.8" fill="#3d8fca"/>
<rect x="1" y="12.6" width="32" height="6.4" fill="#e5e7e8"/>
<circle cx="17" cy="15.8" r="8.3" fill="#5878a6" stroke="#9aa6b6" stroke-width="1.2"/>
<circle cx="17" cy="15.8" r="5.4" fill="#6d87b0" stroke="#4e6b98" stroke-width="0.6"/>
<circle cx="17" cy="15.8" r="2.1" fill="#c6d0de"/>
<rect x="3" y="21" width="3.4" height="1.6" rx="0.8" fill="#f2f5f8"/>
<rect x="27.4" y="21" width="3.4" height="1.6" rx="0.8" fill="#f2f5f8"/>
<rect x="4.5" y="3.2" width="1.5" height="0.8" fill="#444"/>
</svg>
<svg style="position:absolute;left:86.9px;top:177.1px" width="32" height="32" viewBox="0 0 32 32">
<defs><linearGradient id="kg" x1="0" y1="0" x2="0" y2="1"><stop offset="0" stop-color="#f3f3f1"/><stop offset="1" stop-color="#d2d2cd"/></linearGradient></defs>
<rect x="1.6" y="2.2" width="13.6" height="13.2" rx="1.4" fill="url(#kg)" stroke="#b9b9b4" stroke-width="0.9"/>
<text x="7.2" y="11.4" font-size="7" font-family="Liberation Sans" fill="#222" stroke="#222" stroke-width="0.25">y</text>
<rect x="16.4" y="2" width="14" height="13.8" rx="1.6" fill="url(#kg)" stroke="#1b4fa0" stroke-width="1.4"/>
<text x="22" y="11" font-size="6.4" font-family="Liberation Sans" fill="#222" stroke="#222" stroke-width="0.3">x</text>
<rect x="1.8" y="17.4" width="23.4" height="14" rx="1.8" fill="url(#kg)" stroke="#1b4fa0" stroke-width="1.4"/>
<text x="4.4" y="27.4" font-size="7.2" font-weight="bold" font-family="Liberation Sans" fill="#333">Ctrl</text>
<circle cx="26.4" cy="17.6" r="1.2" fill="#1b4fa0"/>
</svg>
<svg style="position:absolute;left:88px;top:214px" width="32" height="36" viewBox="0 0 32 36">
<defs><linearGradient id="pls" x1="0" y1="0" x2="1" y2="1"><stop offset="0" stop-color="#2f9be8"/><stop offset="1" stop-color="#63c0f6"/></linearGradient>
<linearGradient id="plb" x1="0" y1="0.2" x2="0.8" y2="0"><stop offset="0" stop-color="#c8c8c8"/><stop offset="0.45" stop-color="#3a3a3a"/><stop offset="1" stop-color="#000"/></linearGradient></defs>
<path d="M5.8 4.6 L8.4 3.6 L11.2 33 L8.6 33.6 Z" fill="#f6f6f6" stroke="#dedede" stroke-width="0.5"/>
<path d="M7.7 4.3 L22.6 4.3 L25.5 29.4 L10.2 32.3 Z" fill="url(#plb)" stroke="#6a5a50" stroke-width="0.6" stroke-linejoin="round"/>
<path d="M9.4 6 L21.8 6 L23 16.4 L10.6 17 Z" fill="url(#pls)"/>
<path d="M14 16.8 Q19.5 14 22 7" stroke="#a8dcfa" stroke-width="0.7" fill="none" opacity="0.7"/>
<circle cx="17.9" cy="23.4" r="3.3" fill="none" stroke="#e2e2e2" stroke-width="2.1"/>
<circle cx="17.9" cy="23.4" r="2.2" fill="#222"/>
</svg>
<svg style="position:absolute;left:87.2px;top:254.4px" width="32" height="32" viewBox="0 0 32 32">
<defs><radialGradient id="bg1" cx="0.5" cy="0.32" r="0.62"><stop offset="0" stop-color="#f2f5fb"/><stop offset="0.55" stop-color="#c9d7f0"/><stop offset="1" stop-color="#86a4de"/></radialGradient>
<linearGradient id="bg3" x1="0" y1="0" x2="0" y2="1"><stop offset="0" stop-color="#fff" stop-opacity="0"/><stop offset="0.55" stop-color="#fff" stop-opacity="0"/><stop offset="1" stop-color="#eef0ee" stop-opacity="0.9"/></linearGradient>
<linearGradient id="bg2" x1="0" y1="0" x2="1" y2="0"><stop offset="0" stop-color="#a9a46a"/><stop offset="0.5" stop-color="#e9e5b8"/><stop offset="1" stop-color="#8e884e"/></linearGradient></defs>
<path d="M16 2.4 Q25.6 2.4 25.6 11.8 Q25.6 15.8 22.2 19 Q20.6 20.6 20.5 22.2 L11.5 22.2 Q11.4 20.6 9.8 19 Q6.4 15.8 6.4 11.8 Q6.4 2.4 16 2.4 Z" fill="url(#bg1)" stroke="#747a8c" stroke-width="0.8"/>
<path d="M16 2.4 Q25.6 2.4 25.6 11.8 Q25.6 15.8 22.2 19 Q20.6 20.6 20.5 22.2 L11.5 22.2 Q11.4 20.6 9.8 19 Q6.4 15.8 6.4 11.8 Q6.4 2.4 16 2.4 Z" fill="url(#bg3)"/>
<ellipse cx="15.6" cy="8.6" rx="5.6" ry="4.2" fill="#f4f7fc" opacity="0.7"/>
<path d="M13.6 20.6 L15 17 L16 19 L17 17 L18.4 20.6" stroke="#b9b49a" stroke-width="0.6" fill="none"/>
<path d="M11.5 22.2 L20.5 22.2 L20.2 29 L11.8 29 Z" fill="url(#bg2)" stroke="#6d6a40" stroke-width="0.6"/>
<path d="M12 24.4 L20 24.4 M12 26.6 L20 26.6" stroke="#7a7444" stroke-width="0.6"/>
<path d="M13.4 29 L18.6 29 Q17.8 31.4 16 31.4 Q14.2 31.4 13.4 29 Z" fill="#4a4a4a"/>
</svg>
<svg style="position:absolute;left:67px;top:2px" width="16" height="16" viewBox="0 0 16 16">
<defs><linearGradient id="aig" x1="0" y1="0" x2="1" y2="0.2"><stop offset="0" stop-color="#8fb4e6"/><stop offset="0.5" stop-color="#5b92dc"/><stop offset="0.55" stop-color="#1e66cc"/><stop offset="1" stop-color="#0e4db8"/></linearGradient></defs>
<path d="M5 12 L8.6 12 L8.8 14.2 L4.8 14.2 Z" fill="#b9b9b9"/>
<path d="M0.6 0.6 L13.2 1.2 L14.6 11.2 L2.6 12.4 Z" fill="#ecebe4"/>
<path d="M1.2 0.9 L12.6 1.6 L14.1 10.7 L3 11.8 Z" fill="url(#aig)"/>
<circle cx="5.8" cy="4.7" r="2.1" fill="#4d4d55" stroke="#b8b8c0" stroke-width="0.5"/>
<circle cx="10.3" cy="8.1" r="2.1" fill="#4d4d55" stroke="#b8b8c0" stroke-width="0.5"/>
<path d="M5.2 4.2 L6.4 5.2 M9.8 8.6 L10.8 7.6" stroke="#e0e0e0" stroke-width="0.6"/>
</svg>
<svg style="position:absolute;left:86px;top:4px" width="10" height="10" viewBox="0 0 10 10">
<path d="M5.6 0.8 L9.2 4.4 L7.6 5 L5.6 7 L5.8 8.2 L1.8 4.2 L3 4.4 L5 2.4 Z" fill="#111"/>
<path d="M3.6 6.4 L0.8 9.2" stroke="#111" stroke-width="1.1"/>
</svg>
<svg style="position:absolute;left:652px;top:24px" width="34" height="36" viewBox="0 0 34 36">
<path d="M16.8 3.6 Q12.2 3.6 12 9 Q11.8 12.6 11 15.2 Q7.6 19.4 7 25 Q6.8 28.6 8.8 31.6 Q12 33.6 16.8 33.6 Q22 33.6 25.8 31.4 Q29.2 28.6 28.2 23.4 Q27.2 18.4 23.8 14.6 Q22.6 12 22.6 9 Q22.4 3.6 16.8 3.6 Z" fill="#3a3a3a"/>
<path d="M16 14.6 Q11.6 16.4 9.6 21.4 Q8.4 25.6 9.6 29 Q12.4 32.6 17 32.6 Q21 32.4 22.8 29.6 Q24 26 23 21.4 Q21.8 16.6 18.6 15 Q17.2 14.4 16 14.6 Z" fill="#f9f9f9"/>
<ellipse cx="14.6" cy="9.2" rx="1.6" ry="1.9" fill="#ececec"/><ellipse cx="19" cy="9.2" rx="1.6" ry="1.9" fill="#ececec"/>
<circle cx="14.9" cy="9.6" r="0.7" fill="#222"/><circle cx="18.7" cy="9.6" r="0.7" fill="#222"/>
<path d="M12.6 12 Q16.8 10.4 21 12 Q20.2 15.6 16.8 15.8 Q13.4 15.6 12.6 12 Z" fill="#c9c9c9"/>
<path d="M3.4 31.6 Q3 28.4 6 27.2 Q9 26.2 10.8 28.2 L14.2 32.4 Q14.6 34.4 11.8 34.8 Q7.4 35.2 4.6 33.8 Q3.4 33 3.4 31.6 Z" fill="#c8c8c8"/>
<path d="M30.8 31.6 Q31 28.8 28.2 27.8 Q25.4 27 23.8 28.6 L20.8 32.6 Q20.6 34.4 23.2 34.8 Q27.2 35.2 29.8 33.8 Q30.8 33 30.8 31.6 Z" fill="#c8c8c8"/>
</svg>
<svg style="position:absolute;left:168px;top:143.4px" width="8" height="11" viewBox="0 0 8 11">
<path d="M0 3 L3 3 L7.2 0 L7.2 10.4 L3 7.6 L0 7.6 Z" fill="#3daee9"/>
</svg>
<svg style="position:absolute;left:168px;top:160.5px" width="9" height="12" viewBox="0 0 9 12">
<rect x="2.2" y="0" width="4.6" height="7.4" rx="2.3" fill="#3daee9"/>
<path d="M0.9 4.4 Q0.9 8.6 4.5 8.6 Q8.1 8.6 8.1 4.4" fill="none" stroke="#3daee9" stroke-width="1.1"/>
<rect x="3.9" y="8.4" width="1.2" height="2" fill="#3daee9"/>
<rect x="1.4" y="10.2" width="6.2" height="1.2" fill="#3daee9"/>
</svg>
<svg style="position:absolute;left:168px;top:178.5px" width="9" height="12" viewBox="0 0 9 12">
<rect x="2.2" y="0" width="4.6" height="7.4" rx="2.3" fill="#3daee9"/>
<path d="M0.9 4.4 Q0.9 8.6 4.5 8.6 Q8.1 8.6 8.1 4.4" fill="none" stroke="#3daee9" stroke-width="1.1"/>
<rect x="3.9" y="8.4" width="1.2" height="2" fill="#3daee9"/>
<rect x="1.4" y="10.2" width="6.2" height="1.2" fill="#3daee9"/>
</svg>
<svg style="position:absolute;left:511px;top:70.5px" width="16" height="16" viewBox="0 0 16 16">
<rect x="6.2" y="2.8" width="5" height="4.6" fill="#3f6cc8" stroke="#8aa0c8" stroke-width="0.4"/>
<path d="M9 7.6 L12.6 7.6 L13.2 9.6 L9.6 9.6 Z" fill="#a8a8a0"/>
<rect x="3.7" y="5.2" width="5.4" height="4.6" fill="#4470cc" stroke="#8aa0c8" stroke-width="0.4"/>
<path d="M3.2 10 L9.8 10 L10.6 13 L2.6 13 Z" fill="#9a9a92"/>
<path d="M3.6 11 L9.6 11 M3.4 12 L9.9 12" stroke="#c8c8c0" stroke-width="0.4"/>
</svg>
<svg style="position:absolute;left:638px;top:4px;" width="12" height="10" viewBox="0 0 12 10"><path d="M2 3.5 L6 7.5 L10 3.5" fill="none" stroke="#333" stroke-width="1.2"/></svg>
<svg style="position:absolute;left:655px;top:4px;" width="12" height="10" viewBox="0 0 12 10"><path d="M2 7.5 L6 3.5 L10 7.5" fill="none" stroke="#333" stroke-width="1.2"/></svg>
<svg style="position:absolute;left:672px;top:3px;" width="12" height="12" viewBox="0 0 12 12"><path d="M2.2 3.2 L8.8 9.8 M8.8 3.2 L2.2 9.8" fill="none" stroke="#333" stroke-width="1.2"/></svg>
</body></html>
